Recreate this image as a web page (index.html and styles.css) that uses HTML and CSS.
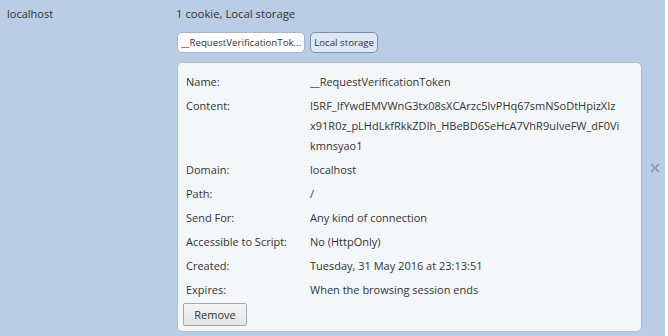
FILE: index.html
```html
<!DOCTYPE html>
<html lang="en">

<head>
    <meta charset="UTF-8">
    <title>Cookies and site data</title>
    <link rel="stylesheet" href="styles.css">
</head>

<body>
    <!-- Site row -->
    <div class="site-row">
        <div class="site-name">localhost</div>

        <div class="site-details">
            <div class="summary">1 cookie, Local storage</div>

            <div class="chips">
                <span class="chip">__RequestVerificationTok...</span>
                <span class="chip chip-active">Local storage</span>
            </div>

            <!-- Cookie info card -->
            <div class="card">
                <div class="info-row">
                    <div class="label">Name:</div>
                    <div class="value">__RequestVerificationToken</div>
                </div>
                <div class="info-row">
                    <div class="label">Content:</div>
                    <div class="value">I5RF_IfYwdEMVWnG3tx08sXCArzc5lvPHq67smNSoDtHpizXIz<br>x91R0z_pLHdLkfRkkZDIh_HBeBD6SeHcA7VhR9uIveFW_dF0Vi<br>kmnsyao1</div>
                </div>
                <div class="info-row">
                    <div class="label">Domain:</div>
                    <div class="value">localhost</div>
                </div>
                <div class="info-row">
                    <div class="label">Path:</div>
                    <div class="value">/</div>
                </div>
                <div class="info-row">
                    <div class="label">Send For:</div>
                    <div class="value">Any kind of connection</div>
                </div>
                <div class="info-row">
                    <div class="label">Accessible to Script:</div>
                    <div class="value">No (HttpOnly)</div>
                </div>
                <div class="info-row">
                    <div class="label">Created:</div>
                    <div class="value">Tuesday, 31 May 2016 at 23:13:51</div>
                </div>
                <div class="info-row">
                    <div class="label">Expires:</div>
                    <div class="value">When the browsing session ends</div>
                </div>
                <button class="remove-btn">Remove</button>
            </div>
        </div>

        <div class="close-btn" title="Remove">
            <svg width="10" height="10" viewBox="0 0 10 10">
                <path d="M1 1 L9 9 M9 1 L1 9" stroke="#8792a6" stroke-width="1.6" />
            </svg>
        </div>
    </div>
</body>

</html>
```

FILE: styles.css
```css
/* General Reset */
* {
    margin: 0;
    padding: 0;
    box-sizing: border-box;
}

body {
    font-family: 'Open Sans', 'Noto Sans', sans-serif;
    font-size: 11px;
    color: #333;
    background-color: #fff;
}

/* Site row */
.site-row {
    display: flex;
    width: 665px;
    height: 336px;
    background-color: #b9cde5;
    padding-top: 5px;
}

.site-name {
    width: 176px;
    padding-left: 7px;
    line-height: 18px;
}

.site-details {
    width: 466px;
}

.summary {
    line-height: 18px;
    font-size: 11.3px;
}

/* Chips */
.chips {
    display: flex;
    gap: 5px;
    margin-top: 9px;
    padding-left: 1px;
}

.chip {
    height: 21px;
    line-height: 19px;
    padding: 0 3px;
    font-size: 9.7px;
    background: #fff;
    border: 1px solid #a9b5c6;
    border-radius: 5px;
}

.chip-active {
    background: #dde6f4;
    border-color: #8191ad;
}

/* Card */
.card {
    margin-top: 9px;
    margin-left: 1px;
    background: #f4f7f9;
    border: 1px solid #b3bdc9;
    border-radius: 5px;
    padding: 7px 8px 5px 5px;
    height: 270px;
}

.info-row {
    display: flex;
    padding: 2px 0 2px 3px;
    line-height: 20px;
}

.label {
    width: 124px;
    flex-shrink: 0;
}

.value {
    white-space: nowrap;
}

/* Remove button */
.remove-btn {
    margin-top: 1px;
    width: 64px;
    height: 23px;
    font-family: inherit;
    font-size: 11px;
    color: #333;
    background: linear-gradient(#f6f6f6, #e4e4e4);
    border: 1px solid #a9a9a9;
    border-radius: 2px;
}

/* Close icon */
.close-btn {
    align-self: center;
    margin-left: 8px;
    margin-top: -5px;
    width: 10px;
    height: 10px;
    display: flex;
}
```
